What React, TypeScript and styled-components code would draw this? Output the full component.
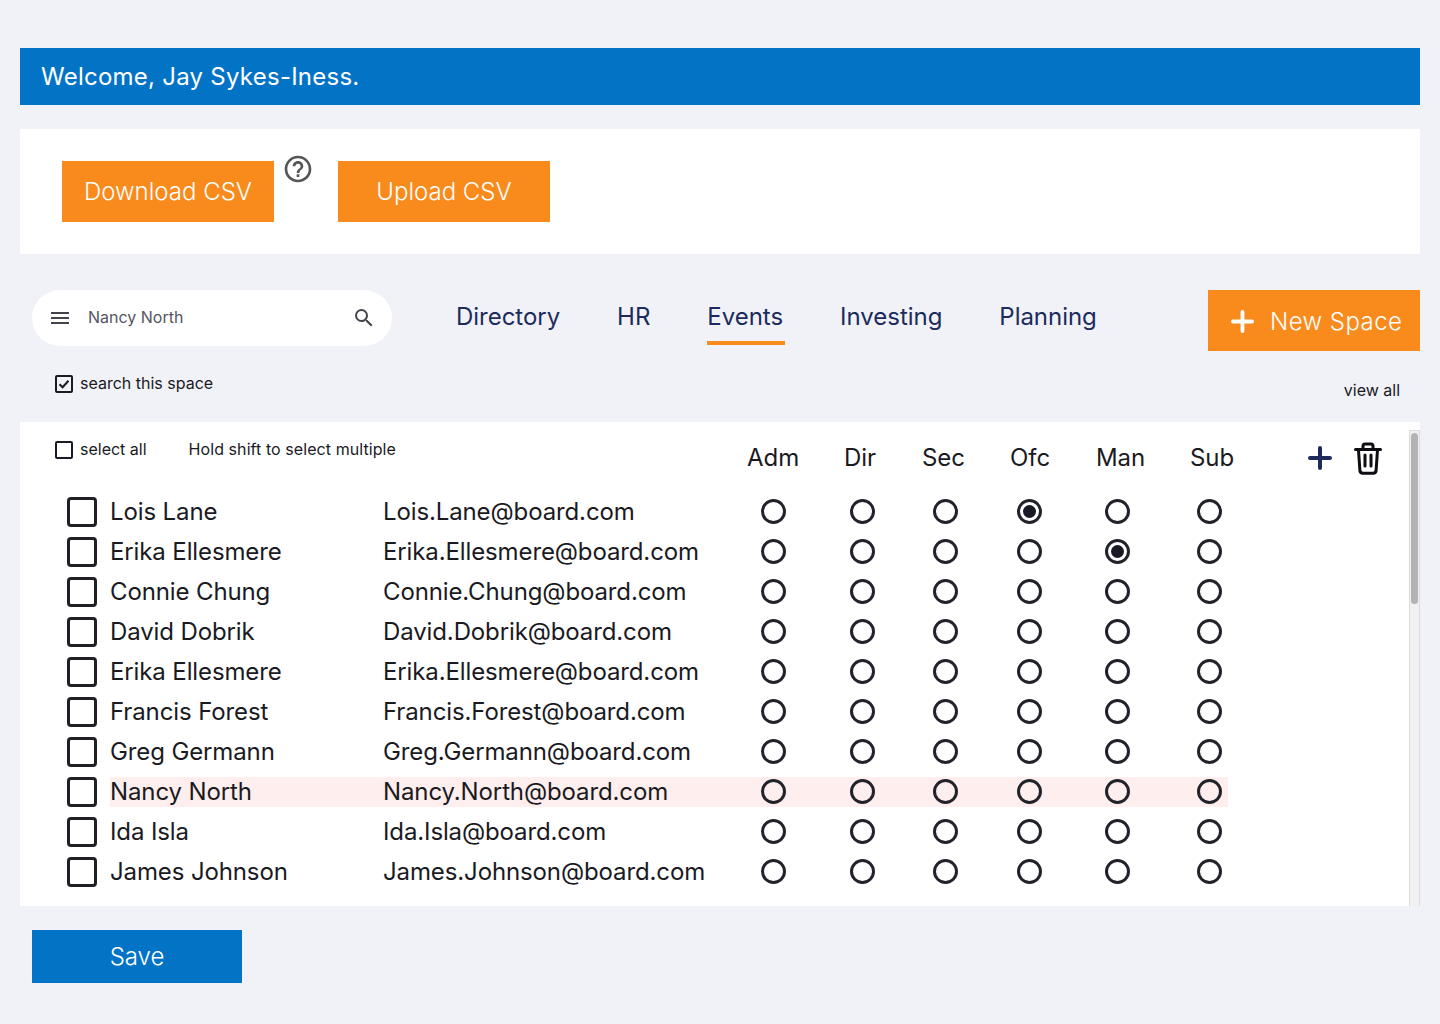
import React from "react";
import styled, { createGlobalStyle } from "styled-components";

const Global = createGlobalStyle`
  html, body { margin: 0; padding: 0; background: #f0f2f7; }
  body { font-family: Inter, "Liberation Sans", sans-serif; color: #1a1a1f; }
  * { box-sizing: border-box; }
`;

const Page = styled.div`
  width: 1440px;
  height: 1024px;
  padding: 48px 20px 0;
  display: flex;
  flex-direction: column;
  overflow: hidden;
`;

const Banner = styled.div`
  height: 57px;
  background: #0373c6;
  color: #fff;
  font-size: 24px;
  line-height: 57px;
  padding-left: 21px;
  letter-spacing: 0.25px;
`;

const CsvCard = styled.div`
  margin-top: 24px;
  height: 125px;
  background: #fff;
  padding: 32px 0 0 42px;
  display: flex;
  align-items: flex-start;
`;

const OrangeButton = styled.button`
  width: 212px;
  height: 61px;
  border: 0;
  background: #f98b1d;
  color: #fff;
  font: 350 24px Inter, sans-serif;
  display: flex;
  align-items: center;
  justify-content: center;
  padding: 0;
`;

const HelpWrap = styled.span`
  width: 64px;
  height: 32px;
  margin-top: -8px;
  padding-left: 8px;
  display: block;
`;

const NavRow = styled.div`
  margin-top: 36px;
  height: 61px;
  display: flex;
  align-items: flex-start;
`;

const SearchBar = styled.div`
  margin-left: 12px;
  width: 360px;
  height: 56px;
  border-radius: 28px;
  background: #fff;
  display: flex;
  align-items: center;
  padding: 0 16px 0 16px;
  color: #55555f;
  font-size: 16px;
`;

const SearchText = styled.span`
  margin-left: 16px;
  padding-bottom: 2px;
  flex: 1;
`;

const Tabs = styled.div`
  margin-left: 64px;
  display: flex;
  gap: 57px;
  flex: 1;
`;

const Tab = styled.div<{ $active?: boolean }>`
  height: 55px;
  padding-top: 12px;
  font-size: 24px;
  line-height: 30px;
  letter-spacing: -0.03px;
  color: #1c2b5c;
  border-bottom: 4px solid ${(p) => (p.$active ? "#f98b1d" : "transparent")};
  ${(p) => (p.$active ? "margin-right: -2px; padding-right: 2px;" : "")}
`;

const NewSpace = styled(OrangeButton)`
  justify-content: flex-start;
  padding: 2px 0 0 23px;
  gap: 16px;
  letter-spacing: 0.45px;
`;

const OptionRow = styled.div`
  height: 71px;
  display: flex;
  justify-content: space-between;
  padding: 0 20px 0 35px;
  font-size: 16px;
`;

const CheckLabel = styled.label`
  display: flex;
  align-items: center;
  gap: 7px;
  height: 20px;
  font-size: 16px;
  line-height: 20px;
`;

const LabelText = styled.span`
  padding-bottom: 2px;
`;

const SearchScope = styled(CheckLabel)`
  margin-top: 23px;
`;

const ViewAll = styled.span`
  margin-top: 29px;
  line-height: 20px;
`;

const SmallBox = styled.span`
  width: 18px;
  height: 18px;
  border: 2px solid #1a1a26;
  border-radius: 2px;
  display: flex;
  align-items: center;
  justify-content: center;
`;

const Panel = styled.div`
  height: 484px;
  background: #fff;
  display: flex;
`;

const PanelBody = styled.div`
  flex: 1;
  min-width: 0;
`;

const PanelHead = styled.div`
  height: 75px;
  display: flex;
  align-items: flex-start;
  padding-left: 35px;
`;

const HeadNote = styled.span`
  margin: 17px 0 0 42px;
  font-size: 16px;
  line-height: 20px;
  letter-spacing: 0.07px;
`;

const SelectAll = styled(CheckLabel)`
  margin-top: 18px;
`;

const HeadColumns = styled.div`
  margin-left: 351px;
  margin-top: 21px;
  display: grid;
  grid-template-columns: 97px 78px 88px 86px 94px 118px 46px 40px;
  font-size: 24px;
  line-height: 30px;
  align-items: start;
`;

const HeadIcon = styled.span<{ $top: number }>`
  display: block;
  margin-top: ${(p) => p.$top}px;
  line-height: 0;
`;

const Rows = styled.div`
  display: flex;
  flex-direction: column;
  gap: 10px;
`;

const Row = styled.div`
  height: 30px;
  display: flex;
  padding-left: 47px;
  gap: 13px;
`;

const RowBox = styled.span`
  width: 30px;
  height: 30px;
  border: 3px solid #1f1f26;
  border-radius: 4px;
  flex: none;
`;

const RowCells = styled.div<{ $hot?: boolean }>`
  width: 1118px;
  height: 30px;
  display: grid;
  grid-template-columns: 273px 378px 89px 83px 84px 88px 92px 31px;
  align-items: start;
  font-size: 24px;
  line-height: 30px;
  letter-spacing: -0.12px;
  background: ${(p) => (p.$hot ? "#feeeee" : "transparent")};
`;

const Radio = styled.span<{ $on?: boolean }>`
  width: 25px;
  height: 25px;
  margin-top: 2px;
  border: 3px solid #22222a;
  border-radius: 50%;
  display: flex;
  align-items: center;
  justify-content: center;
  &::after {
    content: "";
    width: 13px;
    height: 13px;
    border-radius: 50%;
    background: ${(p) => (p.$on ? "#1a1a26" : "transparent")};
  }
`;

const Scrollbar = styled.div`
  width: 11px;
  margin-top: 8px;
  background: #f1f1f1;
  border: 1px solid #dcdcdc;
  border-bottom: 0;
  padding: 2px 1px 0;
`;

const Thumb = styled.div`
  height: 171px;
  background: #b3b3b3;
  border-radius: 4px;
`;

const SaveButton = styled.button`
  margin: 24px 0 0 12px;
  width: 210px;
  height: 53px;
  border: 0;
  background: #0373c6;
  color: #fff;
  font: 350 24px Inter, sans-serif;
`;

const Help = () => (
  <svg width="32" height="32" viewBox="0 0 24 24" fill="#555558" aria-hidden>
    <path d="M11 18h2v-2h-2v2zm1-16C6.48 2 2 6.48 2 12s4.48 10 10 10 10-4.48 10-10S17.52 2 12 2zm0 18c-4.41 0-8-3.59-8-8s3.59-8 8-8 8 3.59 8 8-3.59 8-8 8zm0-14c-2.21 0-4 1.79-4 4h2c0-1.1.9-2 2-2s2 .9 2 2c0 2-3 1.75-3 5h2c0-2.25 3-2.5 3-5 0-2.21-1.79-4-4-4z" />
  </svg>
);
const Menu = () => (
  <svg width="24" height="24" viewBox="0 0 24 24" fill="#44444c" aria-hidden>
    <path d="M3 18h18v-2H3v2zm0-5h18v-2H3v2zm0-7v2h18V6H3z" />
  </svg>
);
const SearchIcon = () => (
  <svg width="24" height="24" viewBox="0 0 24 24" fill="#44444c" aria-hidden>
    <path d="M15.5 14h-.79l-.28-.27A6.471 6.471 0 0 0 16 9.5 6.5 6.5 0 1 0 9.5 16c1.61 0 3.09-.59 4.23-1.57l.27.28v.79l5 4.99L20.49 19l-4.99-5zm-6 0C7.01 14 5 11.99 5 9.5S7.01 5 9.5 5 14 7.01 14 9.5 11.99 14 9.5 14z" />
  </svg>
);
const Plus = ({ color, size }: { color: string; size: number }) => (
  <svg width={size} height={size} viewBox="0 0 24 24" fill="none" stroke={color} strokeWidth="4" strokeLinecap="round" aria-hidden>
    <path d="M12 2v20M2 12h20" />
  </svg>
);
const Tick = () => (
  <svg width="12" height="12" viewBox="0 0 12 12" fill="none" stroke="#1a1a26" strokeWidth="2" aria-hidden>
    <path d="M1.5 6.2 4.6 9.2 10.5 2.8" />
  </svg>
);
const Trash = () => (
  <svg width="28" height="34" viewBox="0 0 28 34" fill="none" stroke="#0d0d12" strokeWidth="3" strokeLinejoin="round" strokeLinecap="round" aria-hidden>
    <path d="M1.5 7.5h25" />
    <path d="M9 7V4a2 2 0 0 1 2-2h6a2 2 0 0 1 2 2v3" />
    <path d="M4.5 8l1.4 20.5a3 3 0 0 0 3 2.7h10.2a3 3 0 0 0 3-2.7L23.5 8" />
    <path d="M11 13v11M17 13v11" />
  </svg>
);

const people: [string, string, number?][] = [
  ["Lois Lane", "Lois.Lane@board.com", 3],
  ["Erika Ellesmere", "Erika.Ellesmere@board.com", 4],
  ["Connie Chung", "Connie.Chung@board.com"],
  ["David Dobrik", "David.Dobrik@board.com"],
  ["Erika Ellesmere", "Erika.Ellesmere@board.com"],
  ["Francis Forest", "Francis.Forest@board.com"],
  ["Greg Germann", "Greg.Germann@board.com"],
  ["Nancy North", "Nancy.North@board.com"],
  ["Ida Isla", "Ida.Isla@board.com"],
  ["James Johnson", "James.Johnson@board.com"],
];
const roles = ["Adm", "Dir", "Sec", "Ofc", "Man", "Sub"];
const tabs = ["Directory", "HR", "Events", "Investing", "Planning"];

export default function App() {
  return (
    <Page>
      <Global />
      <Banner>Welcome, Jay Sykes-Iness.</Banner>
      <CsvCard>
        <OrangeButton>Download CSV</OrangeButton>
        <HelpWrap><Help /></HelpWrap>
        <OrangeButton>Upload CSV</OrangeButton>
      </CsvCard>
      <NavRow>
        <SearchBar>
          <Menu />
          <SearchText>Nancy North</SearchText>
          <SearchIcon />
        </SearchBar>
        <Tabs>
          {tabs.map((t) => (
            <Tab key={t} $active={t === "Events"}>{t}</Tab>
          ))}
        </Tabs>
        <NewSpace><Plus color="#fff" size={23} />New Space</NewSpace>
      </NavRow>
      <OptionRow>
        <SearchScope><SmallBox><Tick /></SmallBox><LabelText>search this space</LabelText></SearchScope>
        <ViewAll>view all</ViewAll>
      </OptionRow>
      <Panel>
        <PanelBody>
          <PanelHead>
            <SelectAll><SmallBox /><LabelText>select all</LabelText></SelectAll>
            <HeadNote>Hold shift to select multiple</HeadNote>
            <HeadColumns>
              {roles.map((r) => <span key={r}>{r}</span>)}
              <HeadIcon $top={3}><Plus color="#1c2b5c" size={24} /></HeadIcon>
              <HeadIcon $top={-1}><Trash /></HeadIcon>
            </HeadColumns>
          </PanelHead>
          <Rows>
            {people.map(([name, mail, on]) => (
              <Row key={name + mail + (on ?? "")}>
                <RowBox />
                <RowCells $hot={name === "Nancy North"}>
                  <span>{name}</span>
                  <span>{mail}</span>
                  {roles.map((r, i) => <Radio key={r} $on={i === on} />)}
                </RowCells>
              </Row>
            ))}
          </Rows>
        </PanelBody>
        <Scrollbar><Thumb /></Scrollbar>
      </Panel>
      <div>
        <SaveButton>Save</SaveButton>
      </div>
    </Page>
  );
}
